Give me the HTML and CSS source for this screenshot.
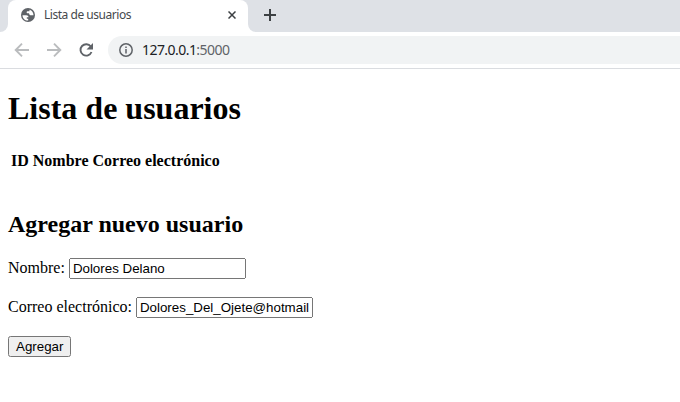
FILE: index.html
```html
<!DOCTYPE html>
<html lang="es">
<head>
<meta charset="utf-8">
<title>Lista de usuarios</title>
<link rel="stylesheet" href="styles.css">
</head>
<body>
<header class="browser">
  <div class="tabstrip">
    <div class="strip-left"></div>
    <div class="tab">
      <svg class="globe" viewBox="0 0 14 14"><circle cx="7" cy="7" r="7" fill="#5f6368"/><path d="M1.500 7.200H5.200C6.700 7.200 7.500 8 7.500 9.200H5.800V10.800H7.200V12.500C4 12.700 1.500 10.200 1.500 7.200zM8.500 1.700V3.200H6.500C5.500 3.200 5.200 5 6.300 5.200H8C8.300 6.500 8.800 7.300 10 7.300H12.500C12.500 4.500 11 2.300 8.500 1.700z" fill="#fff"/></svg>
      <span class="tab-title">Lista de usuarios</span>
      <svg class="close" viewBox="0 0 8 8"><path d="M.5.5l7 7M7.500.5l-7 7"/></svg>
    </div>
    <div class="strip-right">
      <svg class="plus" viewBox="0 0 12 12"><path d="M6 0v12M0 6h12"/></svg>
    </div>
  </div>
  <div class="toolbar">
    <svg class="nav off" viewBox="0 0 16 16"><path d="M15 8H2M8 1.700 1.700 8 8 14.300"/></svg>
    <svg class="nav off" viewBox="0 0 16 16"><path d="M1 8h13M8 1.700 14.300 8 8 14.300"/></svg>
    <svg class="nav" viewBox="0 0 16 16"><path d="M12.800 4.500A5.700 5.700 0 1 0 13.500 10"/><path class="fill" d="M15 1v6.500H8.500z"/></svg>
    <div class="address">
      <svg class="info" viewBox="0 0 14 14"><circle cx="7" cy="7" r="6.200"/><path d="M7 6v4.500M7 3.500V5"/></svg>
      <span class="url">127.0.0.1<span class="port">:5000</span></span>
    </div>
  </div>
</header>
<main class="page">
  <h1>Lista de usuarios</h1>
  <table><tr><th>ID</th><th>Nombre</th><th>Correo electrónico</th></tr></table>
  <h2>Agregar nuevo usuario</h2>
  <form>
    <label for="n">Nombre:</label>
    <input id="n" type="text" value="Dolores Delano"><br><br>
    <label for="c">Correo electrónico:</label>
    <input id="c" type="text" value="Dolores_Del_Ojete@hotmail.com"><br><br>
    <button type="button">Agregar</button>
  </form>
</main>
</body>
</html>
```
FILE: styles.css
```css
body { margin: 0; background: #fff; color: #000; font-family: "Liberation Serif", serif; font-size: 16px; overflow: hidden; }
.browser { font-family: "Noto Sans", sans-serif; }
.tabstrip { display: flex; height: 32px; background: linear-gradient(#dee1e6 16px, #fff 16px); }
.strip-left { width: 8px; background: #dee1e6; border-radius: 0 0 8px 0; }
.strip-right { flex: 1; display: flex; align-items: center; background: #dee1e6; border-radius: 0 0 0 8px; }
.tab { box-sizing: border-box; display: flex; align-items: center; width: 240px; height: 32px; padding: 0 12px 2px 13px; background: #fff; border-radius: 8px 8px 0 0; }
.globe { width: 14px; height: 14px; }
.tab-title { flex: 1; margin-left: 9px; font-size: 12px; line-height: 16px; letter-spacing: -0.47px; color: #45494d; }
.close { width: 8px; height: 8px; fill: none; stroke: #3c4043; stroke-width: 1.500; }
.plus { width: 12px; height: 12px; margin: 0 0 2px 16px; fill: none; stroke: #3c4043; stroke-width: 2; }
.toolbar { box-sizing: border-box; display: flex; align-items: center; gap: 16px; height: 37px; padding-left: 14px; border-bottom: 1px solid #dadce0; background: #fff; }
.nav { width: 16px; height: 16px; flex: none; fill: none; stroke: #5f6368; stroke-width: 1.900; }
.nav.off { stroke: #babcbe; }
.nav .fill { fill: #5f6368; stroke: none; }
.address { flex: 1; display: flex; align-items: center; height: 28px; margin-left: -2px; padding-left: 11px; background: #f1f3f4; border-radius: 14px 0 0 14px; }
.info { width: 14px; height: 14px; fill: none; stroke: #5f6368; stroke-width: 1.500; }
.url { margin: 0 0 2px 9px; font-size: 14px; letter-spacing: -0.55px; color: #202124; }
.port { color: #5f6368; }
.page { padding: 0 8px; }
h1 { margin: 21px 0 22px; font-size: 32px; line-height: 37px; }
h2 { margin: 38px 0 20px; font-size: 24px; line-height: 27px; }
input, button { font-family: "Liberation Sans", Arial, sans-serif; font-size: 13.333px; }
input { box-sizing: border-box; width: 177px; }
```
